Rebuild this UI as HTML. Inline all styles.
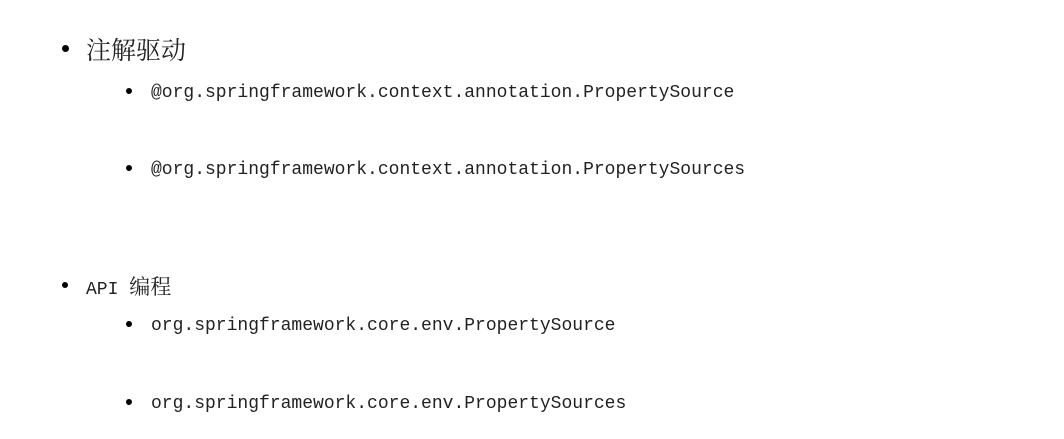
<!DOCTYPE html>
<html><head><meta charset="utf-8"><style>
html,body{margin:0;padding:0;background:#fff;width:1064px;height:439px;overflow:hidden}
.t{position:absolute;white-space:nowrap;color:#222;line-height:24px;height:24px}
.m{font-family:"Liberation Mono","Noto Serif CJK SC",monospace;font-size:18px}
.b{position:absolute;width:7px;height:7px;border-radius:50%;background:#000}
</style></head><body>
<div class="b" style="left:62px;top:45px"></div>
<div class="t" style="left:86px;top:37px;font-family:'Noto Serif CJK SC','Noto Sans CJK SC',serif;font-size:25px">注解驱动</div>
<div class="b" style="left:126px;top:88px;width:6px;height:6px"></div>
<div class="t m" style="left:151px;top:81px">@org.springframework.context.annotation.PropertySource</div>
<div class="b" style="left:126px;top:165px;width:6px;height:6px"></div>
<div class="t m" style="left:151px;top:158px">@org.springframework.context.annotation.PropertySources</div>
<div class="b" style="left:62px;top:282px;width:6px;height:6px"></div>
<div class="t m" style="left:86px;top:274px">API <span style="font-family:'Noto Serif CJK SC',serif;font-size:21px">编程</span></div>
<div class="b" style="left:126px;top:321px;width:6px;height:6px"></div>
<div class="t m" style="left:151px;top:314px">org.springframework.core.env.PropertySource</div>
<div class="b" style="left:126px;top:399px;width:6px;height:6px"></div>
<div class="t m" style="left:151px;top:392px">org.springframework.core.env.PropertySources</div>
</body></html>
